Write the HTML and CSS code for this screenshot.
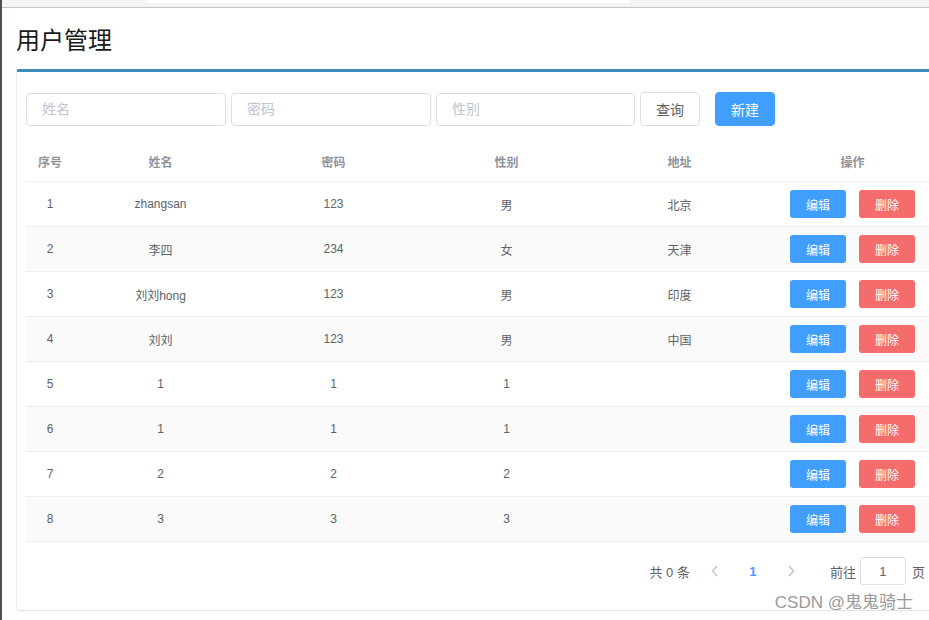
FILE: index.html
```html
<!DOCTYPE html>
<html lang="zh">
<head>
<meta charset="utf-8">
<title>用户管理</title>
<link rel="stylesheet" href="styles.css">
</head>
<body>
<div class="edge"></div>
<div class="shell">
  <div class="topbar"><div class="tab"></div></div>
  <div class="page">
    <h1 class="title">用户管理</h1>
    <div class="box">
      <div class="search">
        <input class="field" placeholder="姓名">
        <input class="field" placeholder="密码">
        <input class="field" placeholder="性别">
        <button class="btn btn-plain">查询</button>
        <button class="btn btn-primary btn-new">新建</button>
      </div>
      <table class="grid">
        <colgroup>
          <col class="c-idx"><col class="c-w"><col class="c-w"><col class="c-w"><col class="c-w"><col class="c-w">
        </colgroup>
        <thead>
          <tr><th>序号</th><th>姓名</th><th>密码</th><th>性别</th><th>地址</th><th>操作</th></tr>
        </thead>
        <tbody>
          <tr><td>1</td><td>zhangsan</td><td>123</td><td>男</td><td>北京</td><td><span class="ops"><button class="mini edit">编辑</button><button class="mini del">删除</button></span></td></tr>
          <tr class="stripe"><td>2</td><td>李四</td><td>234</td><td>女</td><td>天津</td><td><span class="ops"><button class="mini edit">编辑</button><button class="mini del">删除</button></span></td></tr>
          <tr><td>3</td><td>刘刘hong</td><td>123</td><td>男</td><td>印度</td><td><span class="ops"><button class="mini edit">编辑</button><button class="mini del">删除</button></span></td></tr>
          <tr class="stripe"><td>4</td><td>刘刘</td><td>123</td><td>男</td><td>中国</td><td><span class="ops"><button class="mini edit">编辑</button><button class="mini del">删除</button></span></td></tr>
          <tr><td>5</td><td>1</td><td>1</td><td>1</td><td></td><td><span class="ops"><button class="mini edit">编辑</button><button class="mini del">删除</button></span></td></tr>
          <tr class="stripe"><td>6</td><td>1</td><td>1</td><td>1</td><td></td><td><span class="ops"><button class="mini edit">编辑</button><button class="mini del">删除</button></span></td></tr>
          <tr><td>7</td><td>2</td><td>2</td><td>2</td><td></td><td><span class="ops"><button class="mini edit">编辑</button><button class="mini del">删除</button></span></td></tr>
          <tr class="stripe"><td>8</td><td>3</td><td>3</td><td>3</td><td></td><td><span class="ops"><button class="mini edit">编辑</button><button class="mini del">删除</button></span></td></tr>
        </tbody>
      </table>
      <div class="pager">
        <span class="total">共 0 条</span>
        <span class="nav"><svg width="8" height="12" viewBox="0 0 8 12"><polyline points="6,1 1.5,6 6,11" fill="none" stroke="#c0c4cc" stroke-width="1.4"/></svg></span>
        <span class="num">1</span>
        <span class="nav"><svg width="8" height="12" viewBox="0 0 8 12"><polyline points="2,1 6.5,6 2,11" fill="none" stroke="#c0c4cc" stroke-width="1.4"/></svg></span>
        <span class="jump">前往<input class="jump-in" value="1">页</span>
      </div>
    </div>
  </div>
</div>
<div class="mark">CSDN @鬼鬼骑士</div>
</body>
</html>
```
FILE: styles.css
```css
html, body {
  margin: 0;
  padding: 0;
  overflow: hidden;
  height: 620px;
}
body {
  display: flex;
  font-family: "Liberation Sans", "Noto Sans CJK SC", sans-serif;
  background: #fff;
  color: #606266;
}
.edge {
  width: 2px;
  flex: none;
  background: #564a4a;
}
.shell {
  flex: 1;
  min-width: 0;
}
.topbar {
  height: 7px;
  background: #f3f3f3;
  border-bottom: 1px solid #c6c6c6;
  display: flex;
}
.tab {
  margin-left: 143px;
  width: 485px;
  height: 3px;
  background: #fff;
  border-radius: 0 0 4px 4px;
}
.page {
  padding-left: 14px;
}
.title {
  margin: 16px 0 0;
  font-size: 24px;
  line-height: 34px;
  font-weight: normal;
  color: #1a1a1a;
}
.box {
  margin-top: 11px;
  width: 933px;
  box-sizing: border-box;
  border-top: 3px solid #3c8dbc;
  border-left: 1px solid #f0f0f0;
  border-radius: 3px;
  box-shadow: 0 1px 1px rgba(0, 0, 0, 0.12);
  padding: 20px 10px 25px 9px;
  background: #fff;
}
.search {
  display: flex;
  align-items: center;
  gap: 5px;
  height: 34px;
}
.field {
  width: 200px;
  height: 33px;
  box-sizing: border-box;
  border: 1px solid #dcdfe6;
  border-radius: 4px;
  padding: 0 15px;
  font-family: inherit;
  font-size: 14px;
  color: #606266;
  outline: none;
}
.field:nth-child(3) {
  width: 199px;
}
.field::placeholder {
  color: #c0c4cc;
}
.btn {
  width: 60px;
  height: 34px;
  box-sizing: border-box;
  border-radius: 4px;
  font-family: inherit;
  font-size: 14px;
  padding: 0;
}
.btn-plain {
  background: #fff;
  border: 1px solid #dcdfe6;
  color: #606266;
}
.btn-primary {
  background: #409eff;
  border: 1px solid #409eff;
  color: #fff;
}
.btn-new {
  margin-left: 10px;
}
.grid {
  margin-top: 16px;
  width: 913px;
  table-layout: fixed;
  border-collapse: separate;
  border-spacing: 0;
  font-size: 12px;
}
.c-idx { width: 48px; }
.c-w { width: 173px; }
.grid th {
  height: 39px;
  padding: 0;
  color: #909399;
  font-weight: bold;
  text-align: center;
  border-bottom: 1px solid #ebeef5;
}
.grid td {
  height: 45px;
  padding: 0;
  box-sizing: border-box;
  text-align: center;
  color: #606266;
  border-bottom: 1px solid #ebeef5;
}
.grid tr.stripe td {
  background: #fafafa;
}
.ops {
  display: inline-flex;
  gap: 13px;
  vertical-align: middle;
}
.mini {
  width: 56px;
  height: 28px;
  border: none;
  border-radius: 3px;
  color: #fff;
  font-family: inherit;
  font-size: 12px;
  padding: 0;
}
.edit { background: #409eff; }
.del { background: #f56c6c; }
.pager {
  margin-top: 15px;
  width: 913px;
  box-sizing: border-box;
  padding-right: 14px;
  display: flex;
  justify-content: flex-end;
  align-items: center;
  height: 28px;
  font-size: 13px;
  color: #606266;
}
.total {
  margin-right: 6px;
}
.nav, .num {
  width: 38px;
  height: 28px;
  display: flex;
  align-items: center;
  justify-content: center;
}
.num {
  color: #409eff;
  font-weight: bold;
}
.jump {
  margin-left: 20px;
  display: flex;
  align-items: center;
}
.jump-in {
  width: 46px;
  height: 28px;
  box-sizing: border-box;
  margin: 0 6px 0 4px;
  border: 1px solid #dcdfe6;
  border-radius: 3px;
  text-align: center;
  font-family: inherit;
  font-size: 13px;
  color: #606266;
  padding: 0;
  outline: none;
}
.mark {
  position: absolute;
  right: 16px;
  bottom: 7px;
  font-size: 17px;
  color: #9a9a9a;
  white-space: nowrap;
}
```
